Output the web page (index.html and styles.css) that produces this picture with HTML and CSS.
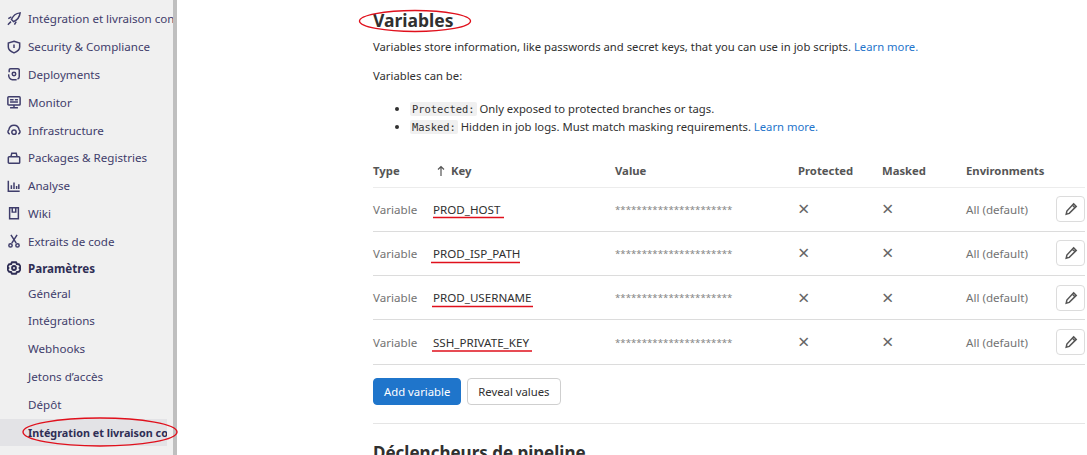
FILE: index.html
```html
<!DOCTYPE html>
<html lang="fr">
<head>
<meta charset="utf-8">
<title>Variables</title>
<link rel="stylesheet" href="styles.css">
</head>
<body>
<div class="page">
<nav class="sidebar">
  <a class="nav-item"><svg class="ico" viewBox="0 0 16 16"><path d="M15 1C10.500 1.500 7 4 5 8.500l2.500 2.500C12 9 14.500 5.500 15 1z" class="s"/><path d="M5 5.500 1.500 7.500M10.500 11l-2 3.500M4.500 11 1 14.500" class="s"/></svg><span>Intégration et livraison con</span></a>
  <a class="nav-item"><svg class="ico" viewBox="0 0 16 16"><path d="M8 1.500 14.500 3.500V8c0 3.500-3.500 5.500-6.500 6.700C5 13.500 1.500 11.500 1.500 8V3.500z" class="s"/><path d="M8 5v4" class="s"/></svg><span>Security &amp; Compliance</span></a>
  <a class="nav-item"><svg class="ico" viewBox="0 0 16 16"><path d="M2.500 6V3.500a1.500 1.500 0 0 1 1.500-1.500h8.500a1.500 1.500 0 0 1 1.500 1.500V11a3 3 0 0 1-2 2.800M2 8.500A5 5 0 0 0 6 14.500h5" class="s"/><circle cx="8" cy="8" r="2" class="s"/></svg><span>Deployments</span></a>
  <a class="nav-item"><svg class="ico" viewBox="0 0 16 16"><rect x="1" y="2" width="14" height="9.500" rx="1" class="s"/><path d="M3.500 5.500h4M9 5.500h3.500M3.500 8h9M8 11.500v2.500M3.500 14.500h9" class="s"/></svg><span>Monitor</span></a>
  <a class="nav-item"><svg class="ico" viewBox="0 0 16 16"><path d="M3.200 12.500C1 12 .5 9.500 2 8c.6-3 3-5.500 6-5.500S13.400 5 14 8c1.500 1.500 1 4-1.200 4.500" class="s"/><circle cx="8" cy="10.500" r="2.500" class="s"/></svg><span>Infrastructure</span></a>
  <a class="nav-item"><svg class="ico" viewBox="0 0 16 16"><path d="M4.500 6.500 5.500 2.500h5l1 4" class="s"/><rect x="1.500" y="6.500" width="13" height="7.500" rx="1" class="s"/></svg><span>Packages &amp; Registries</span></a>
  <a class="nav-item"><svg class="ico" viewBox="0 0 16 16"><path d="M1.500 2v12h13M5 7v4.500M8 4v7.500M11 8v3.500M13.500 6v5.500" class="s"/></svg><span>Analyse</span></a>
  <a class="nav-item"><svg class="ico" viewBox="0 0 16 16"><path d="M3 2h10v12.500H3zM6 2v5h4V2" class="s"/></svg><span>Wiki</span></a>
  <a class="nav-item"><svg class="ico" viewBox="0 0 16 16"><path d="M4.500 1 10.500 10.500M11.500 1 5.500 10.500" class="s"/><circle cx="4" cy="13" r="1.900" class="s"/><circle cx="12" cy="13" r="1.900" class="s"/></svg><span>Extraits de code</span></a>
  <a class="nav-item nav-parent"><svg class="ico" viewBox="0 0 16 16"><path d="M5.500 1.500h5l.8 2 2.400.2 2 3.300-1.500 1 1.500 1-2 3.300-2.400.2-.8 2h-5l-.8-2-2.400-.2-2-3.300 1.500-1-1.500-1 2-3.300 2.400-.2z" class="s2"/><circle cx="8" cy="8" r="2.200" class="s2"/></svg><span>Paramètres</span></a>
  <ul class="subnav">
    <li>Général</li>
    <li>Intégrations</li>
    <li>Webhooks</li>
    <li>Jetons d’accès</li>
    <li>Dépôt</li>
    <li class="active">Intégration et livraison co</li>
    <li>Monitor</li>
  </ul>
</nav>
<main class="content">
  <h2 class="title">Variables</h2>
  <p class="intro">Variables store information, like passwords and secret keys, that you can use in job scripts. <a>Learn more.</a></p>
  <p class="intro">Variables can be:</p>
  <ul class="kinds">
    <li><code>Protected:</code> Only exposed to protected branches or tags.</li>
    <li><code>Masked:</code> Hidden in job logs. Must match masking requirements. <a>Learn more.</a></li>
  </ul>
  <table class="vars">
    <thead>
      <tr><th class="c-type">Type</th><th class="c-key"><svg class="arrow" viewBox="0 0 8 12"><path d="M4 11V1.500M1 4.500 4 1.500l3 3"/></svg>Key</th><th class="c-val">Value</th><th class="c-pro">Protected</th><th class="c-mas">Masked</th><th class="c-env">Environments</th><th class="c-act"></th></tr>
    </thead>
    <tbody>
      <tr><td>Variable</td><td class="key">PROD_HOST</td><td class="stars">**********************</td><td><span class="x">×</span></td><td><span class="x">×</span></td><td>All (default)</td><td><button class="edit"><svg viewBox="0 0 16 16"><path d="M11 2 14 5 6 13l-3.500 1 .8-3.700zM9.500 3.500l3 3" class="p"/></svg></button></td></tr>
      <tr><td>Variable</td><td class="key">PROD_ISP_PATH</td><td class="stars">**********************</td><td><span class="x">×</span></td><td><span class="x">×</span></td><td>All (default)</td><td><button class="edit"><svg viewBox="0 0 16 16"><path d="M11 2 14 5 6 13l-3.500 1 .8-3.700zM9.500 3.500l3 3" class="p"/></svg></button></td></tr>
      <tr><td>Variable</td><td class="key">PROD_USERNAME</td><td class="stars">**********************</td><td><span class="x">×</span></td><td><span class="x">×</span></td><td>All (default)</td><td><button class="edit"><svg viewBox="0 0 16 16"><path d="M11 2 14 5 6 13l-3.500 1 .8-3.700zM9.500 3.500l3 3" class="p"/></svg></button></td></tr>
      <tr><td>Variable</td><td class="key">SSH_PRIVATE_KEY</td><td class="stars">**********************</td><td><span class="x">×</span></td><td><span class="x">×</span></td><td>All (default)</td><td><button class="edit"><svg viewBox="0 0 16 16"><path d="M11 2 14 5 6 13l-3.500 1 .8-3.700zM9.500 3.500l3 3" class="p"/></svg></button></td></tr>
    </tbody>
  </table>
  <div class="actions"><button class="btn primary">Add variable</button><button class="btn">Reveal values</button></div>
  <hr class="rule">
  <h2 class="title next">Déclencheurs de pipeline</h2>
</main>
</div>
<svg class="marks" viewBox="0 0 1087 455" width="1087" height="455" fill="none" stroke="#e0101c" stroke-width="1.400">
  <ellipse cx="415" cy="21" rx="55.500" ry="10.500"/>
  <ellipse cx="100" cy="432" rx="77" ry="14"/>
  <path d="M433 217.500H504M431 262.500H520M432 306.500H533M432 351H532"/>
</svg>
</body>
</html>
```
FILE: styles.css
```css
* { box-sizing: border-box; }
html, body { margin: 0; height: 455px; overflow: hidden; background: #fff; }
body { position: relative; font-family: "Noto Sans", sans-serif; font-size: 12px; color: #303030; }
.page { display: flex; height: 455px; overflow: hidden; }
.sidebar { width: 177px; flex: none; height: 455px; overflow: hidden; background: #f0f0f0; border-right: 4px solid #bfbfbf; padding-top: 5px; color: #3f3d6b; font-size: 11.600px; }
.nav-item { display: flex; align-items: center; gap: 7px; height: 27.800px; padding-left: 7px; white-space: nowrap; overflow: hidden; }
.ico { width: 14px; height: 14px; flex: none; }
.s { fill: none; stroke: #3f3d6b; stroke-width: 1.700; }
.s2 { fill: none; stroke: #2f2e55; stroke-width: 2.200; stroke-linejoin: round; }
.nav-parent { font-weight: 700; height: 24.500px; padding-top: 2px; color: #2f2e55; }
.subnav { list-style: none; margin: 0; padding: 0; }
.subnav li { height: 27.800px; line-height: 27.800px; padding-left: 28px; white-space: nowrap; overflow: hidden; }
.subnav li.active { width: 167px; background: #e3e3e6; font-weight: 700; font-size: 10.800px; color: #2f2e55; }
.content { flex: 1; min-width: 0; padding: 10px 2px 0 196px; }
.title { margin: 0; font-size: 17.500px; line-height: 20px; font-weight: 700; color: #303030; }
.intro { margin: 9px 0 13px; font-size: 11.270px; line-height: 16px; color: #303030; }
.content a { color: #1f75cb; }
.kinds { margin: 16px 0 16px; padding: 0 0 0 37px; font-size: 11.270px; line-height: 18px; }
code { font-family: "DejaVu Sans Mono", monospace; font-size: 10.400px; background: #f0f0f0; padding: 1px 2px; border-radius: 2px; }
.vars { width: 100%; border-collapse: collapse; table-layout: fixed; font-size: 11.600px; }
.vars th { text-align: left; font-weight: 700; color: #555; height: 35px; padding: 2px 0 0; border-bottom: 1px solid #ececec; font-size: 11.300px; }
.vars td { height: 44.300px; padding: 0; border-bottom: 1px solid #dcdcdc; color: #737373; }
.c-type { width: 60px; } .c-key { width: 182px; } .c-val { width: 183px; } .c-pro { width: 84px; } .c-mas { width: 84px; } .c-env { width: 90px; }
.arrow { width: 8px; height: 12px; margin: 0 6px 0 4px; vertical-align: -2px; fill: none; stroke: #555; stroke-width: 1.200; }
.vars td.key { color: #303030; }
.vars td.stars { font-size: 9.700px; color: #858585; }
.x { font-size: 20px; line-height: 1; color: #666; }
.edit { width: 29px; height: 26px; border: 1px solid #dcdcdc; border-radius: 4px; background: #fff; padding: 0; display: flex; align-items: center; justify-content: center; }
.edit svg { width: 14px; height: 14px; }
.p { fill: none; stroke: #555; stroke-width: 1.700; }
.actions { display: flex; gap: 6px; margin-top: 13px; }
.btn { height: 27px; padding: 0 10px; border: 1px solid #cfcfcf; border-radius: 4px; background: #fff; font: 11.300px "Noto Sans", sans-serif; color: #303030; }
.btn.primary { background: #1f75cb; border-color: #1f75cb; color: #fff; }
.rule { margin: 18px 0 0; border: 0; border-top: 1px solid #e5e5e5; }
.title.next { margin-top: 19px; font-size: 17px; }
.marks { position: absolute; left: 0; top: 0; pointer-events: none; }
```
